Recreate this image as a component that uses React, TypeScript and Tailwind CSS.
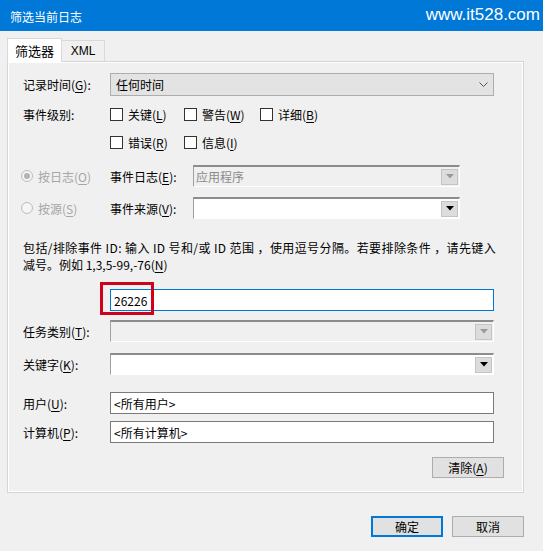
import React from "react";

const U = ({ children }: { children: React.ReactNode }) => (
  <span className="underline underline-offset-[2px]">{children}</span>
);

function Arrow({ disabled }: { disabled?: boolean }) {
  return (
    <div className="mr-[1px] flex h-[16px] w-[17px] items-center justify-center border border-[#c4c4c4] bg-[#dcdcdc]">
      <svg width="8" height="5" viewBox="0 0 8 5">
        <polygon points="0,0 8,0 4,4.5" fill={disabled ? "#9a9a9a" : "#000"} />
      </svg>
    </div>
  );
}

// old 3D-looking combobox
function OldCombo({ value, disabled, className }: { value?: string; disabled?: boolean; className: string }) {
  return (
    <div
      className={`flex h-[22px] items-center justify-between border-t-2 border-l border-b border-r border-t-[#8c8c8c] border-l-[#a0a0a0] border-b-white border-r-white pl-[2px] ${
        disabled ? "bg-[#f0f0f0] text-[#8a8a8a]" : "bg-white"
      } ${className}`}
    >
      <span>{value}</span>
      <Arrow disabled={disabled} />
    </div>
  );
}

function Checkbox({ label, className }: { label: React.ReactNode; className: string }) {
  return (
    <div className={`flex items-center gap-[5px] ${className}`}>
      <div className="h-[13px] w-[13px] border border-[#333] bg-white" />
      <span>{label}</span>
    </div>
  );
}

function Radio({ label, checked }: { label: React.ReactNode; checked?: boolean }) {
  return (
    <div className="flex w-[102px] shrink-0 items-center gap-[5px] pl-[13px] text-[#a6a6a6]">
      <div className="flex h-[12px] w-[12px] items-center justify-center rounded-full border border-[#bcbcbc] bg-[#f5f5f5]">
        {checked && <div className="h-[6px] w-[6px] rounded-full bg-[#b4b4b4]" />}
      </div>
      <span>{label}</span>
    </div>
  );
}

function Label({ children }: { children: React.ReactNode }) {
  return <div className="w-[102px] shrink-0 pl-[15px]">{children}</div>;
}

function TextBox({ value, className }: { value?: string; className: string }) {
  return (
    <div className={`flex h-[22px] w-[384px] items-center bg-white pl-[3px] ${className}`}>{value}</div>
  );
}

function Button({ children, focused, className }: { children: React.ReactNode; focused?: boolean; className?: string }) {
  return (
    <div
      className={`flex h-[21px] w-[72px] items-center justify-center bg-[#e1e1e1] ${
        focused ? "border-2 border-[#0078d7]" : "border border-[#adadad]"
      } ${className ?? ""}`}
    >
      {children}
    </div>
  );
}

export default function App() {
  return (
    <div className="relative h-[551px] w-[543px] overflow-hidden bg-[#f0f0f0] font-['Noto_Sans_CJK_SC','Noto_Sans',sans-serif] text-[12px] leading-[17px] text-black">
      {/* title bar */}
      <div className="flex h-[31px] items-center justify-between bg-[#0078d7] pl-[10px] pr-[3px] text-white">
        <span className="mt-[2px]">筛选当前日志</span>
        <span className="mb-[2px] font-['Liberation_Sans',Arial,sans-serif] text-[17px] leading-none">www.it528.com</span>
      </div>

      {/* tabs */}
      <div className="mt-[7px] flex h-[23px] items-end pl-[7px]">
        <div className="z-10 flex h-[24px] w-[55px] translate-y-[1px] items-center justify-center border border-b-0 border-[#d9d9d9] bg-white text-[13px]">
          筛选器
        </div>
        <div className="flex h-[21px] w-[43px] items-center justify-center border border-l-0 border-b-0 border-[#d9d9d9] bg-[#f0f0f0] font-['Liberation_Sans',Arial,sans-serif] text-[12px]">
          XML
        </div>
      </div>

      {/* tab page */}
      <div className="ml-[7px] flex h-[432px] w-[517px] flex-col border border-[#d5d5d5] shadow-[inset_1px_1px_0_#ffffff,inset_-1px_-1px_0_#ffffff]">
        <div className="mt-[11px] flex items-center">
          <Label>
            记录时间(<U>G</U>):
          </Label>
          <div className="flex h-[23px] w-[384px] items-center justify-between border border-[#adadad] bg-[#e3e3e3] pl-[5px] pr-[5px]">
            <span>任何时间</span>
            <svg width="9" height="6" viewBox="0 0 9 6">
              <polyline points="0.5,0.5 4.5,4.5 8.5,0.5" fill="none" stroke="#555" strokeWidth="1" />
            </svg>
          </div>
        </div>

        <div className="mt-[9px] flex h-[18px] items-center">
          <Label>事件级别:</Label>
          <Checkbox className="w-[74px]" label={<>关键(<U>L</U>)</>} />
          <Checkbox className="w-[76px]" label={<>警告(<U>W</U>)</>} />
          <Checkbox className="w-[75px]" label={<>详细(<U>B</U>)</>} />
        </div>

        <div className="mt-[10px] flex h-[18px] items-center">
          <Label> </Label>
          <Checkbox className="w-[74px]" label={<>错误(<U>R</U>)</>} />
          <Checkbox className="w-[75px]" label={<>信息(<U>I</U>)</>} />
        </div>

        <div className="mt-[14px] flex h-[22px] items-center">
          <Radio checked label={<>按日志(<U>O</U>)</>} />
          <div className="w-[83px] shrink-0">
            事件日志(<U>E</U>):
          </div>
          <OldCombo disabled value="应用程序" className="w-[267px]" />
        </div>

        <div className="mt-[10px] flex h-[22px] items-center">
          <Radio label={<>按源(<U>S</U>)</>} />
          <div className="w-[83px] shrink-0">
            事件来源(<U>V</U>):
          </div>
          <OldCombo className="w-[267px]" />
        </div>

        <p className="mt-[20px] whitespace-nowrap pl-[15px]">
          <span className="tracking-[0.4px]">
            包括/排除事件 ID: 输入 ID 号和/或 ID 范围 ，使用逗号分隔。若要排除条件 ，请先键入
          </span>
          <br />
          减号。例如 1,3,5-99,-76(<U>N</U>)
        </p>

        <div className="mt-[16px] flex items-center">
          <Label> </Label>
          <TextBox value="26226" className="border border-[#0078d7]" />
        </div>

        <div className="mt-[9px] flex items-center">
          <Label>
            任务类别(<U>T</U>):
          </Label>
          <OldCombo disabled className="w-[384px]" />
        </div>

        <div className="mt-[11px] flex items-center">
          <Label>
            关键字(<U>K</U>):
          </Label>
          <OldCombo className="w-[384px]" />
        </div>

        <div className="mt-[17px] flex items-center">
          <Label>
            用户(<U>U</U>):
          </Label>
          <TextBox value="<所有用户>" className="border border-[#7a7a7a]" />
        </div>

        <div className="mt-[7px] flex items-center">
          <Label>
            计算机(<U>P</U>):
          </Label>
          <TextBox value="<所有计算机>" className="border border-[#7a7a7a]" />
        </div>

        <div className="mt-[14px] flex justify-end pr-[19px]">
          <Button>
            清除(<U>A</U>)
          </Button>
        </div>
      </div>

      {/* dialog buttons */}
      <div className="mt-[23px] flex justify-end gap-[9px] pr-[19px]">
        <Button focused>确定</Button>
        <Button>取消</Button>
      </div>

      {/* red annotation box */}
      <div className="pointer-events-none absolute left-[100px] top-[282px] h-[33px] w-[54px] border-[3px] border-[#d0021b]" />
    </div>
  );
}
